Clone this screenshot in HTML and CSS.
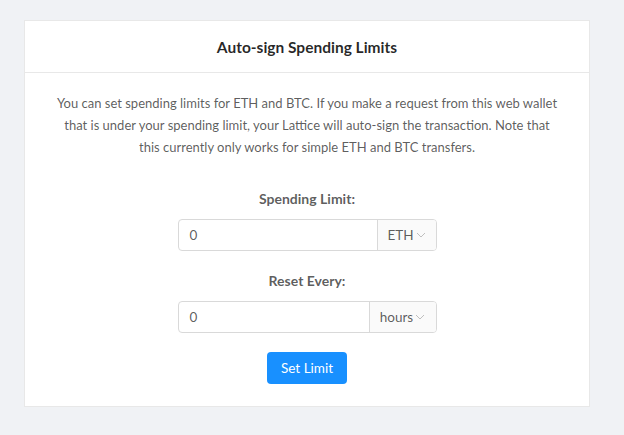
FILE: index.html
```html
<!DOCTYPE html>
<html>
<head>
<meta charset="utf-8">
<link rel="stylesheet" href="styles.css">
</head>
<body>
<div class="page">
  <div class="card">
    <div class="card-head">Auto-sign Spending Limits</div>
    <div class="card-body">
      <p class="intro">You can set spending limits for ETH and BTC. If you make a request from this web wallet that is under your spending limit, your Lattice will auto-sign the transaction. Note that this currently only works for simple ETH and BTC transfers.</p>
      <div class="label">Spending Limit:</div>
      <div class="group">
        <div class="input">0</div>
        <div class="addon addon-eth">ETH<svg class="chev" viewBox="0 0 10 10"><path d="M1 3 L5 7 L9 3" fill="none" stroke="#bfbfbf" stroke-width="1"/></svg></div>
      </div>
      <div class="label label-2">Reset Every:</div>
      <div class="group">
        <div class="input">0</div>
        <div class="addon addon-hours">hours<svg class="chev" viewBox="0 0 10 10"><path d="M1 3 L5 7 L9 3" fill="none" stroke="#bfbfbf" stroke-width="1"/></svg></div>
      </div>
      <button class="btn">Set Limit</button>
    </div>
  </div>
</div>
</body>
</html>
```

FILE: styles.css
```css
html, body {
  margin: 0;
  padding: 0;
  background: #f0f2f5;
  font-family: "Lato", "Noto Sans", sans-serif;
  font-size: 14px;
  color: rgba(0,0,0,0.65);
}
.page {
  padding: 20px 35px 0 24px;
}
.card {
  background: #fff;
  border: 1px solid #e8e8e8;
  box-sizing: border-box;
  width: 566px;
  height: 387px;
}
.card-head {
  height: 51px;
  border-bottom: 1px solid #e8e8e8;
  display: flex;
  align-items: center;
  justify-content: center;
  font-size: 15.5px;
  font-weight: 700;
  color: rgba(0,0,0,0.85);
}
.card-body {
  display: flex;
  flex-direction: column;
  align-items: center;
  padding: 19px 24px 0;
}
.intro {
  margin: 0;
  text-align: center;
  line-height: 22px;
  font-size: 13px;
  width: 504px;
}
.label {
  margin-top: 30px;
  font-weight: 700;
  line-height: 22px;
  font-size: 14px;
}
.label-2 {
  margin-top: 19px;
}
.group {
  margin-top: 9px;
  display: flex;
  width: 259px;
  height: 32px;
  box-sizing: border-box;
  border: 1px solid #d9d9d9;
  border-radius: 4px;
  overflow: hidden;
}
.input {
  flex: 1;
  display: flex;
  align-items: center;
  padding-left: 11px;
  font-size: 13.5px;
}
.addon {
  display: flex;
  align-items: center;
  justify-content: center;
  gap: 2px;
  background: #fafafa;
  border-left: 1px solid #d9d9d9;
  font-size: 13.5px;
}
.addon-eth { width: 58px; }
.addon-hours { width: 66px; }
.chev {
  width: 10px;
  height: 10px;
}
.btn {
  margin-top: 19px;
  width: 80px;
  height: 32px;
  border: none;
  border-radius: 4px;
  background: #1890ff;
  color: #fff;
  font-family: inherit;
  font-size: 13.5px;
  padding: 0;
}
```
